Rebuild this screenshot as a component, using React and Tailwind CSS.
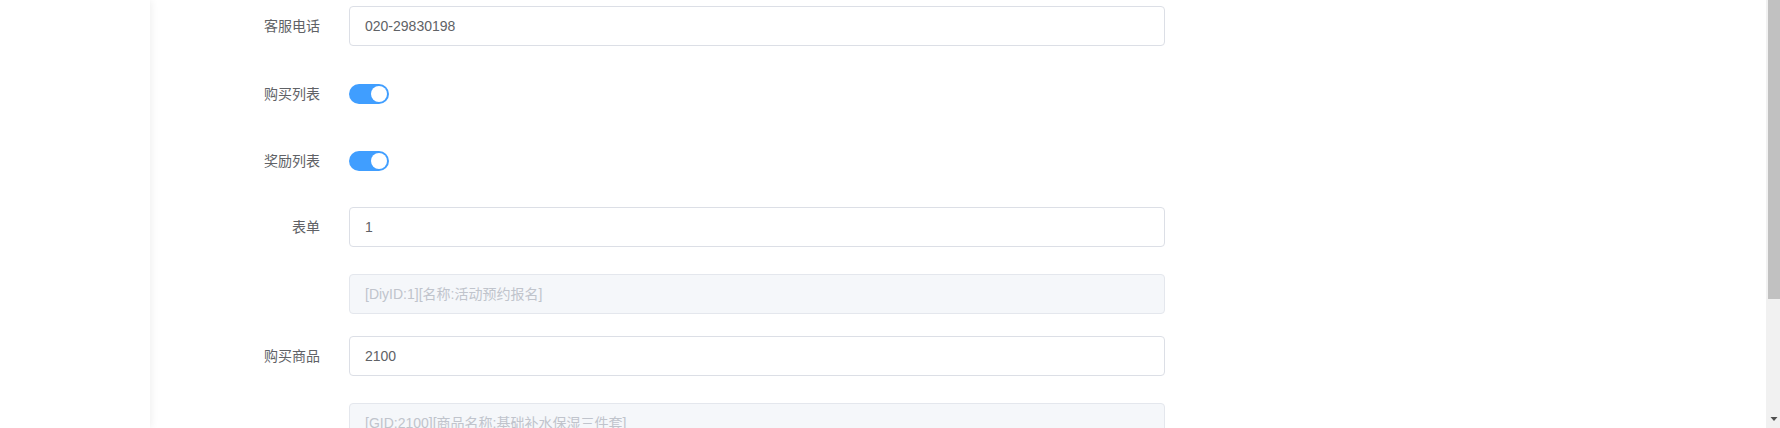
import React from "react";

const font = { fontFamily: '"Liberation Sans", "Noto Sans CJK SC", sans-serif' };

function Label({ children }) {
  return (
    <div className="w-[170px] shrink-0 text-right text-[14px] text-[#606266] pr-0">
      {children}
    </div>
  );
}

function Input({ value, disabled }) {
  return (
    <div
      className={
        "ml-[29px] w-[816px] h-[40px] rounded-[4px] border flex items-center px-[15px] text-[14px] " +
        (disabled
          ? "bg-[#f5f7fa] border-[#e4e7ed] text-[#c0c4cc]"
          : "bg-white border-[#dcdfe6] text-[#606266]")
      }
    >
      {value}
    </div>
  );
}

function Switch() {
  return (
    <div className="ml-[29px] w-[40px] h-[20px] rounded-full bg-[#409eff] flex items-center justify-end px-[2px]">
      <div className="w-[16px] h-[16px] rounded-full bg-white" />
    </div>
  );
}

function Row({ label, children, mt }) {
  return (
    <div className={"flex items-center h-[40px] shrink-0 " + mt}>
      <Label>{label}</Label>
      {children}
    </div>
  );
}

export default function App() {
  return (
    <div className="flex w-[1780px] h-[428px] overflow-hidden bg-white" style={font}>
      <div className="w-[150px] shrink-0 bg-white relative z-10 shadow-[1px_0_8px_rgba(0,0,0,0.07)]" />
      <div className="flex-1 flex flex-col bg-white overflow-hidden">
        <Row label="客服电话" mt="mt-[6px]">
          <Input value="020-29830198" />
        </Row>
        <Row label="购买列表" mt="mt-[28px]">
          <Switch />
        </Row>
        <Row label="奖励列表" mt="mt-[27px]">
          <Switch />
        </Row>
        <Row label="表单" mt="mt-[26px]">
          <Input value="1" />
        </Row>
        <Row label="" mt="mt-[27px]">
          <Input value="[DiyID:1][名称:活动预约报名]" disabled />
        </Row>
        <Row label="购买商品" mt="mt-[22px]">
          <Input value="2100" />
        </Row>
        <Row label="" mt="mt-[27px]">
          <Input value="[GID:2100][商品名称:基础补水保湿三件套]" disabled />
        </Row>
      </div>
      <div className="w-[14px] shrink-0 bg-[#f1f1f1] flex flex-col items-end">
        <div className="w-[12px] h-[299px] bg-[#c1c1c1]" />
        <div className="flex-1" />
        <svg width="12" height="14" viewBox="0 0 12 14" className="mb-[2px]">
          <path d="M2.5 5 L9.5 5 L6 9 Z" fill="#505050" />
        </svg>
      </div>
    </div>
  );
}
